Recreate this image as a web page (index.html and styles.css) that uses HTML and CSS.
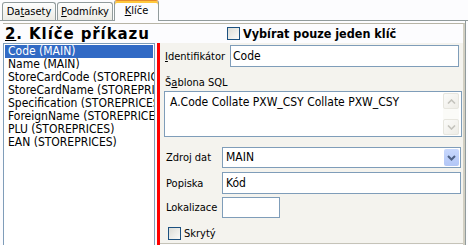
FILE: index.html
```html
<!DOCTYPE html>
<html>
<head>
    <meta charset="utf-8">
    <title>Klíče</title>
    <link rel="stylesheet" href="styles.css">
</head>
<body>

<div class="tabs">
    <div class="tab datasets">Da<u>t</u>asety</div>
    <div class="tab conditions"><u>P</u>odmínky</div>
    <div class="tab active"><u>K</u>líče</div>
</div>

<div class="panel">
    <div class="frame">
        <div class="head">
            <div class="title"><u>2</u>. Klíče příkazu</div>
            <div class="check big"><span class="box"></span>Vybírat pouze jeden klíč</div>
        </div>

        <div class="body">
            <ul class="keys">
                <li class="selected">Code (MAIN)</li>
                <li>Name (MAIN)</li>
                <li>StoreCardCode (STOREPRICES)</li>
                <li>StoreCardName (STOREPRICES)</li>
                <li>Specification (STOREPRICES)</li>
                <li>ForeignName (STOREPRICES)</li>
                <li>PLU (STOREPRICES)</li>
                <li>EAN (STOREPRICES)</li>
            </ul>

            <div class="splitter"></div>

            <div class="detail">
                <div class="row ident">
                    <span class="lbl"><u>I</u>dentifikátor</span>
                    <div class="field">Code</div>
                </div>

                <div class="caption">Š<u>a</u>blona SQL</div>
                <div class="memo">
                    <div class="memo-text">A.Code Collate PXW_CSY Collate PXW_CSY</div>
                    <div class="vscroll">
                        <span class="sb">
                            <svg width="9" height="5" viewBox="0 0 9 5"><path d="M1 4.5 L4.5 1 L8 4.5" fill="none" stroke="#c4c3bd" stroke-width="1.6"/></svg>
                        </span>
                        <span class="sb">
                            <svg width="9" height="5" viewBox="0 0 9 5"><path d="M1 0.5 L4.5 4 L8 0.5" fill="none" stroke="#c4c3bd" stroke-width="1.6"/></svg>
                        </span>
                    </div>
                </div>

                <div class="row source">
                    <span class="lbl">Zdroj dat</span>
                    <div class="field combo">
                        <span class="value">MAIN</span>
                        <span class="drop">
                            <svg width="9" height="6" viewBox="0 0 9 6"><path d="M1 1 L4.5 4.5 L8 1" fill="none" stroke="#4d6185" stroke-width="2"/></svg>
                        </span>
                    </div>
                </div>

                <div class="row label-row">
                    <span class="lbl">Popiska</span>
                    <div class="field">Kód</div>
                </div>

                <div class="row local">
                    <span class="lbl">Lokalizace</span>
                    <div class="field short"></div>
                </div>

                <div class="check hidden"><span class="box"></span>Skrytý</div>
            </div>
        </div>
    </div>
</div>

</body>
</html>
```

FILE: styles.css
```css
body {
    margin: 0;
    width: 468px;
    height: 245px;
    overflow: hidden;
    background-color: #fcfcfe;
    font: 12px "DejaVu Sans Condensed", "DejaVu Sans", sans-serif;
    color: #000;
}

u {
    text-decoration: underline;
    text-underline-offset: 1px;
}

/* tab strip */
.tabs {
    display: flex;
    align-items: flex-end;
    height: 20px;
    padding-left: 2px;
    border-bottom: 1px solid #919b9c;
    font-size: 11px;
}
.tab {
    height: 17px;
    line-height: 17px;
    margin-right: 1px;
    text-align: center;
    border: 1px solid #919b9c;
    border-bottom: none;
    border-radius: 3px 3px 0 0;
    background: linear-gradient(#fefefe, #ecebe5);
}
.tab.datasets {
    width: 52px;
}
.tab.conditions {
    width: 54px;
}
.tab.active {
    width: 43px;
    height: 20px;
    line-height: 20px;
    margin-bottom: -1px;
    border-top: 1px solid #e68b2c;
    box-shadow: inset 0 2px 0 #ffc83c;
    background: #fcfcfe;
}

/* page of the tab */
.panel {
    height: 224px;
    margin-right: 2px;
    padding-top: 2px;
    border-right: 1px solid #919b9c;
    box-sizing: border-box;
}
.frame {
    margin-left: 3px;
    border-top: 1px solid #b7b4a6;
    border-right: 2px solid #d2cfc2;
}

.head {
    display: flex;
    align-items: center;
    height: 19px;
}
.title {
    width: 222px;
    padding-left: 2px;
    font-family: "DejaVu Sans", sans-serif;
    font-size: 15px;
    font-weight: bold;
    letter-spacing: 0.9px;
}

.check {
    display: flex;
    align-items: center;
}
.check .box {
    width: 11px;
    height: 11px;
    margin-right: 3px;
    border: 1px solid #1c5180;
    background: linear-gradient(135deg, #dcdcd6, #fbfbf9);
}
.check.big {
    font-size: 12.5px;
    font-weight: bold;
}

.body {
    display: flex;
    height: 202px;
}

/* list of keys */
.keys {
    width: 148px;
    height: 199px;
    margin: 0;
    padding: 1px;
    list-style: none;
    border: 1px solid #7f9db9;
    background-color: #fff;
    overflow: hidden;
}
.keys li {
    height: 13px;
    line-height: 13px;
    padding-left: 3px;
    white-space: nowrap;
}
.keys li.selected {
    background-color: #316ac5;
    color: #fff;
}

.splitter {
    width: 3px;
    margin-left: 2px;
    background-color: #ff0000;
}

/* detail of a key */
.detail {
    flex: 1;
    height: 200px;
    border-bottom: 1px solid #c5c3b8;
    background-color: #f4f3ee;
}
.row {
    display: flex;
    align-items: center;
}
.lbl {
    width: 56px;
    padding-left: 6px;
    font-size: 11px;
    white-space: nowrap;
}
.field {
    flex: 1;
    height: 19px;
    line-height: 19px;
    margin-right: 2px;
    padding-left: 3px;
    border: 1px solid #7f9db9;
    background-color: #fff;
    white-space: nowrap;
}

.row.ident {
    margin-top: 2px;
}
.row.ident .lbl {
    width: 65px;
    padding-left: 5px;
}
.row.ident .field {
    height: 20px;
    line-height: 20px;
    margin-right: 4px;
    padding-left: 2px;
}

.caption {
    margin-top: 9px;
    padding-left: 5px;
    font-size: 11px;
    line-height: 13px;
}

.memo {
    display: flex;
    height: 44px;
    margin: 2px 1px 0 4px;
    border: 1px solid #7f9db9;
    background-color: #fff;
}
.memo-text {
    flex: 1;
    padding: 3px 0 0 5px;
}
.vscroll {
    display: flex;
    flex-direction: column;
    justify-content: space-between;
    width: 16px;
    margin: 1px 2px 1px 0;
    background-color: #fbfbf8;
}
.sb {
    display: flex;
    align-items: center;
    justify-content: center;
    height: 14px;
    border: 1px solid #e7e6df;
    border-radius: 2px;
    background: linear-gradient(135deg, #fbfbf9, #eeede7);
}

.row.source {
    margin-top: 10px;
}
.combo {
    display: flex;
    justify-content: space-between;
    padding-right: 1px;
}
.drop {
    display: flex;
    align-items: center;
    justify-content: center;
    width: 15px;
    height: 17px;
    margin-top: 1px;
    border-radius: 2px;
    background: linear-gradient(#c8d8fd, #b2c6f6);
}

.row.label-row {
    margin-top: 4px;
}
.row.label-row .field {
    height: 20px;
    line-height: 20px;
}

.row.local {
    margin-top: 3px;
}
.field.short {
    flex: none;
    width: 53px;
}

.check.hidden {
    margin: 9px 0 0 8px;
    font-size: 11px;
}
```
